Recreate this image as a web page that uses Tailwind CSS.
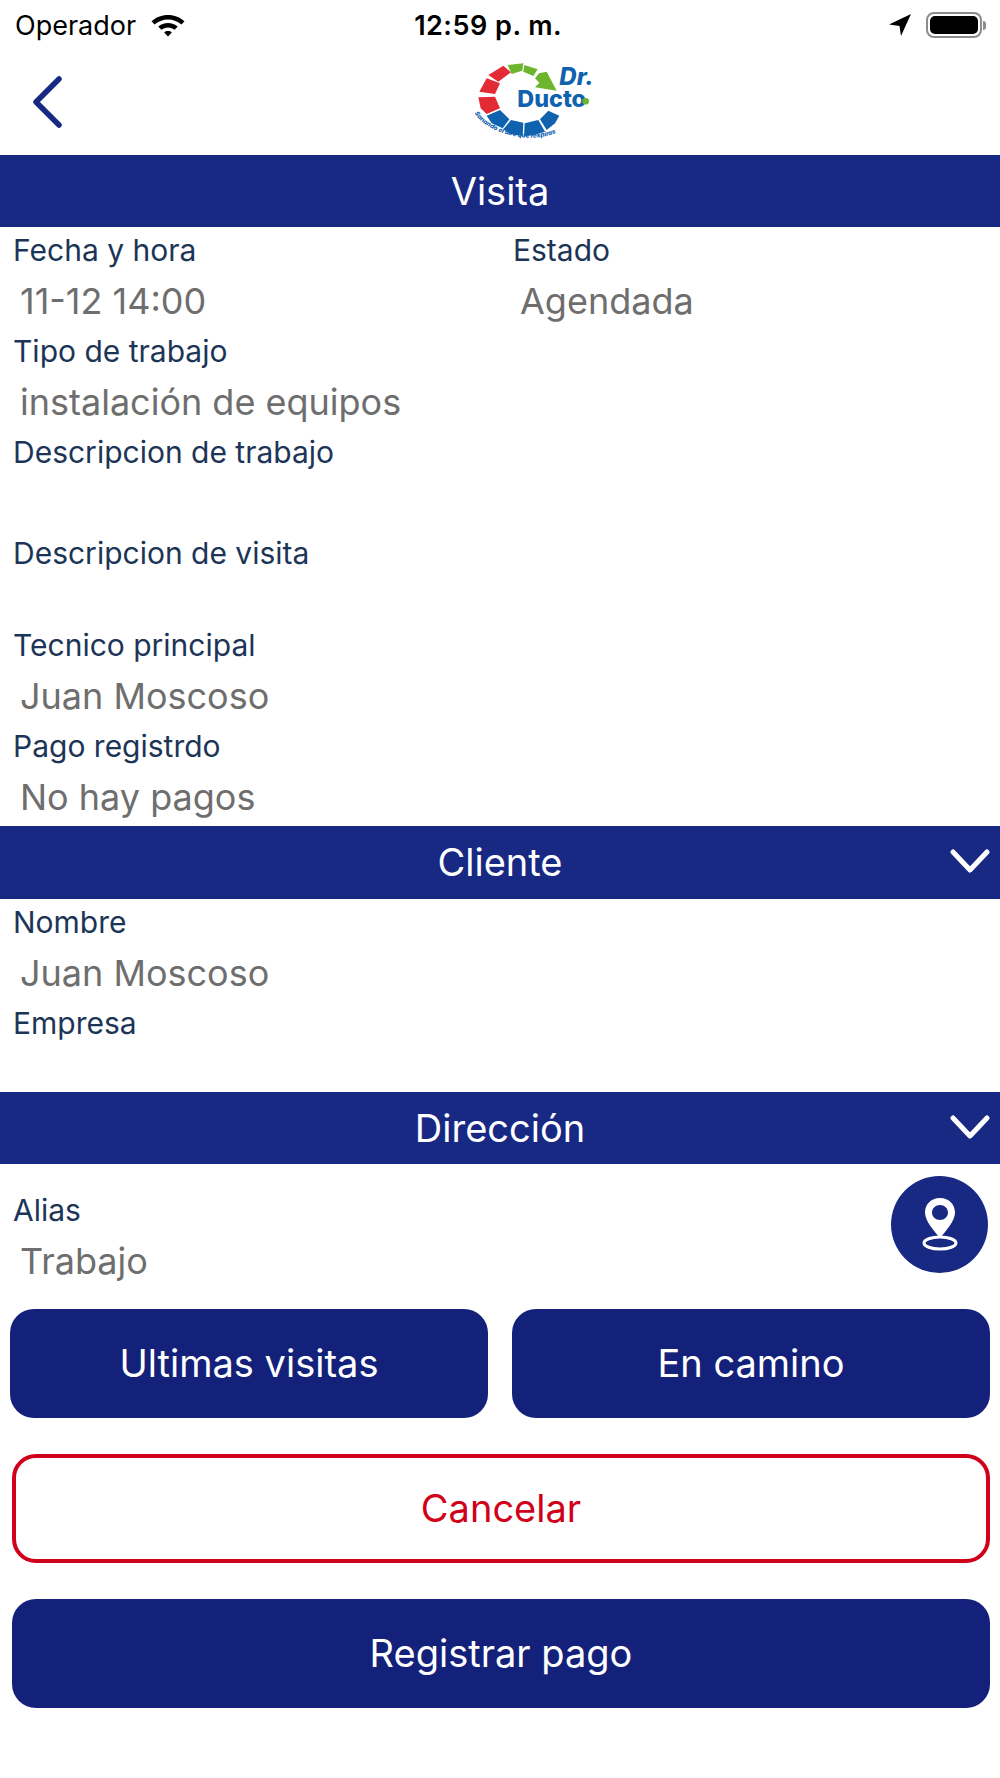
<!DOCTYPE html>
<html lang="es">
<head>
    <meta charset="UTF-8">
    <meta name="viewport" content="width=device-width, initial-scale=1.0">
    <title>Visita</title>
    <script src="https://cdn.jsdelivr.net/npm/@tailwindcss/browser@4"></script>
</head>
<body class="bg-white font-['Inter',sans-serif] w-[1000px] h-[1778px] overflow-hidden">

    <!-- Status bar -->
    <div class="h-[50px] flex items-center pl-[15px] pr-[14px] text-black">
        <span class="text-[27px] leading-none">Operador</span>
        <svg class="ml-[14px] w-[36px] h-[26px]" viewBox="0 0 36 26" fill="#000">
            <path d="M18 3C11.500 3 5.800 5.400 1.500 9.300L4.500 12.500C8 9.400 12.800 7.400 18 7.400C23.200 7.400 28 9.400 31.500 12.500L34.500 9.300C30.200 5.400 24.500 3 18 3Z"/>
            <path d="M18 11C14.300 11 10.900 12.400 8.300 14.600L11.300 17.800C13.100 16.300 15.400 15.400 18 15.400C20.600 15.400 22.900 16.300 24.700 17.800L27.700 14.600C25.100 12.400 21.700 11 18 11Z"/>
            <path d="M18 19C16.500 19 15.200 19.500 14.200 20.400L18 24.500L21.800 20.400C20.800 19.500 19.500 19 18 19Z"/>
        </svg>
        <span class="ml-[222px] w-[160px] text-center text-[27px] leading-none font-semibold tracking-[0.5px]">12:59 p. m.</span>
        <svg class="ml-auto w-[24px] h-[24px]" viewBox="0 0 24 24" fill="#000"><path d="M23 1L1 11.500L11.500 13L13 23Z"/></svg>
        <div class="ml-[14px] flex items-center">
            <div class="w-[56px] h-[26px] rounded-[8px] border-2 border-[#8c8c8c] p-[2px]">
                <div class="w-full h-full rounded-[5px] bg-black"></div>
            </div>
            <div class="w-[3px] h-[9px] ml-[1px] rounded-r-full bg-[#8c8c8c]"></div>
        </div>
    </div>

    <!-- Nav bar -->
    <div class="h-[105px] flex items-start pl-[29px]">
        <svg class="mt-[25px] w-[36px] h-[54px]" viewBox="0 0 36 54" fill="none" stroke="#172983" stroke-width="5.500" stroke-linecap="round" stroke-linejoin="round">
            <path d="M30 4L7 27L30 50"/>
        </svg>
        <!-- Logo -->
        <svg class="ml-[375px] w-[170px] h-[105px]" viewBox="0 0 510 315">
            <g fill="#e32b36">
                <path d="M145 75L190 47L213 67L175 95Z"/>
                <path d="M118 125L140 85L180 100L165 132Z"/>
                <path d="M115 142L165 140L180 175L140 192L122 175Z"/>
            </g>
            <g fill="#0f62ad">
                <path d="M140 197L180 180L208 208L188 235L155 220Z"/>
                <path d="M190 238L213 210L250 218L248 258L210 252Z"/>
                <path d="M252 258L254 220L295 210L315 245L280 256Z"/>
                <path d="M320 240L300 208L325 182L358 197L345 220Z"/>
            </g>
            <g fill="#6cb52d">
                <path d="M203 45L250 40L247 62L215 72Z"/>
                <path d="M253 45L293 58L280 78L250 65Z"/>
                <path d="M297 70L320 65L350 122L285 112L298 98L285 85Z"/>
            </g>
            <text x="358" y="105" font-family="Inter" font-size="72" font-weight="800" font-style="italic" fill="#0f62ad">Dr.</text>
            <text x="232" y="172" font-family="Inter" font-size="70" font-weight="800" fill="#0f62ad">Ducto</text>
            <circle cx="437" cy="154" r="10" fill="#6cb52d"/>
            <path id="tagline" d="M104 190C150 262 300 285 362 240" fill="none"/>
            <text font-family="Inter" font-size="19" font-weight="800" font-style="italic" fill="#0f62ad"><textPath href="#tagline">Sanando el aire que respiras</textPath></text>
        </svg>
    </div>

    <!-- Visita -->
    <div class="h-[72px] bg-[#172983] flex items-center justify-center text-white text-[38px]">Visita</div>
    <div class="h-[599px] px-[13px]">
        <div class="grid grid-cols-2">
            <div>
                <div class="h-[46px] flex items-center text-[#1c3557] text-[30px]">Fecha y hora</div>
                <div class="h-[55px] pl-[7px] flex items-center text-[#6e6e6e] text-[36px]">11-12 14:00</div>
            </div>
            <div class="pl-[13px]">
                <div class="h-[46px] flex items-center text-[#1c3557] text-[30px]">Estado</div>
                <div class="h-[55px] pl-[7px] flex items-center text-[#6e6e6e] text-[36px]">Agendada</div>
            </div>
        </div>
        <div class="h-[46px] flex items-center text-[#1c3557] text-[30px]">Tipo de trabajo</div>
        <div class="h-[55px] pl-[7px] flex items-center text-[#6e6e6e] text-[36px]">instalación de equipos</div>
        <div class="h-[46px] flex items-center text-[#1c3557] text-[30px]">Descripcion de trabajo</div>
        <div class="h-[55px]"></div>
        <div class="h-[46px] flex items-center text-[#1c3557] text-[30px]">Descripcion de visita</div>
        <div class="h-[46px]"></div>
        <div class="h-[46px] flex items-center text-[#1c3557] text-[30px]">Tecnico principal</div>
        <div class="h-[55px] pl-[7px] flex items-center text-[#6e6e6e] text-[36px]">Juan Moscoso</div>
        <div class="h-[46px] flex items-center text-[#1c3557] text-[30px]">Pago registrdo</div>
        <div class="h-[55px] pl-[7px] flex items-center text-[#6e6e6e] text-[36px]">No hay pagos</div>
    </div>

    <!-- Cliente -->
    <div class="h-[73px] bg-[#172983] flex items-center justify-center relative text-white text-[38px]">
        Cliente
        <svg class="absolute right-[10px] top-[22px] w-[40px] h-[26px]" viewBox="0 0 40 26" fill="none" stroke="#fff" stroke-width="5" stroke-linecap="round" stroke-linejoin="round"><path d="M3 4L20 22L37 4"/></svg>
    </div>
    <div class="h-[193px] px-[13px]">
        <div class="h-[46px] flex items-center text-[#1c3557] text-[30px]">Nombre</div>
        <div class="h-[55px] pl-[7px] flex items-center text-[#6e6e6e] text-[36px]">Juan Moscoso</div>
        <div class="h-[46px] flex items-center text-[#1c3557] text-[30px]">Empresa</div>
    </div>

    <!-- Direccion -->
    <div class="h-[72px] bg-[#172983] flex items-center justify-center relative text-white text-[38px]">
        Dirección
        <svg class="absolute right-[10px] top-[22px] w-[40px] h-[26px]" viewBox="0 0 40 26" fill="none" stroke="#fff" stroke-width="5" stroke-linecap="round" stroke-linejoin="round"><path d="M3 4L20 22L37 4"/></svg>
    </div>
    <div class="relative h-[145px] px-[13px] pt-[23px]">
        <div class="h-[46px] flex items-center text-[#1c3557] text-[30px]">Alias</div>
        <div class="h-[55px] pl-[7px] flex items-center text-[#6e6e6e] text-[36px]">Trabajo</div>
        <div class="absolute left-[891px] top-[12px] w-[97px] h-[97px] rounded-full bg-[#172983] flex items-center justify-center">
            <svg class="w-[40px] h-[56px]" viewBox="0 0 40 56" fill="#fff">
                <path fill-rule="evenodd" d="M20 1C10.600 1 5 8 5 15.500C5 24 14 34 20 41C26 34 35 24 35 15.500C35 8 29.400 1 20 1ZM20 8C24.400 8 28 11.300 28 15.500C28 19.700 24.400 23 20 23C15.600 23 12 19.700 12 15.500C12 11.300 15.600 8 20 8Z"/>
                <ellipse cx="20" cy="46" rx="16" ry="6" fill="none" stroke="#fff" stroke-width="3"/>
            </svg>
        </div>
    </div>

    <!-- Buttons -->
    <div class="px-[10px] flex gap-[24px]">
        <button class="w-[478px] h-[109px] rounded-[24px] bg-[#14217a] text-white text-[38px]">Ultimas visitas</button>
        <button class="w-[478px] h-[109px] rounded-[24px] bg-[#14217a] text-white text-[38px]">En camino</button>
    </div>
    <div class="pl-[12px] pr-[10px] mt-[36px]">
        <button class="w-full h-[109px] rounded-[24px] border-[4px] border-[#d0021b] bg-white text-[#d0021b] text-[38px]">Cancelar</button>
    </div>
    <div class="pl-[12px] pr-[10px] mt-[36px]">
        <button class="w-full h-[109px] rounded-[24px] bg-[#14217a] text-white text-[38px]">Registrar pago</button>
    </div>

</body>
</html>
